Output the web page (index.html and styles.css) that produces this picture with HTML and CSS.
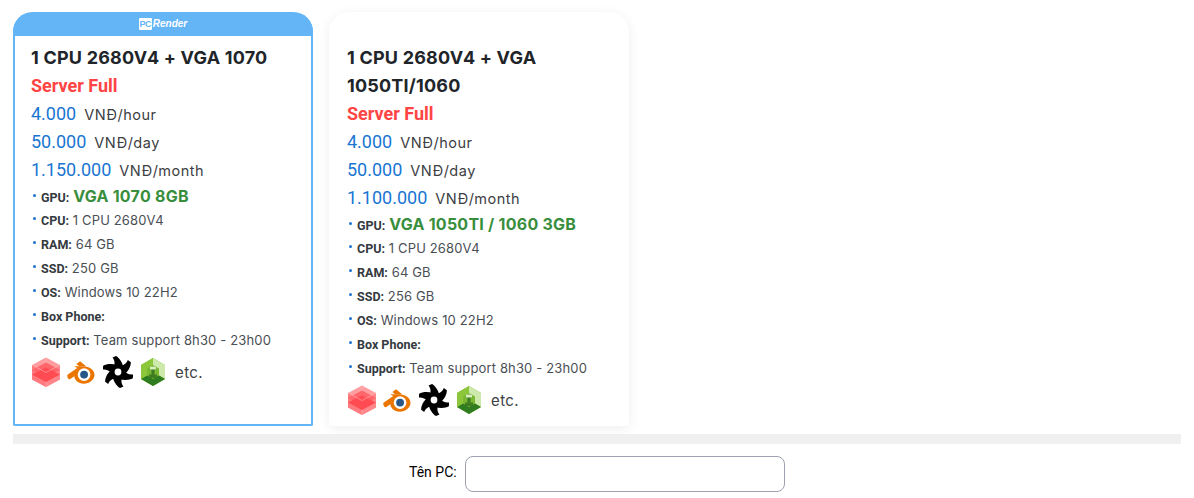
FILE: index.html
```html
<!DOCTYPE html>
<html lang="vi">
<head>
<meta charset="utf-8">
<title>PC Render</title>
<link rel="stylesheet" href="styles.css">
</head>
<body>
<svg class="defs" width="0" height="0" aria-hidden="true">
  <defs>
    <symbol id="i-redshift" viewBox="0 0 30 30">
      <path d="M15 0.500 29 8V22.500L15 30 1 22.500V8Z" fill="#ff9ea1"/>
      <path d="M1 8 15 15.500V30L1 22.500Z" fill="#ff7a7e"/>
      <path d="M29 8 15 15.500V30L29 22.500Z" fill="#ff868a"/>
      <path d="M1 13 15 5.500 29 13 15 20.500Z" fill="#ff666b"/>
      <path d="M1 17.500 15 10.500 29 17.500 15 25Z" fill="#ff4b51"/>
      <path d="M15 0.500V5.500M15 25V30M1 8 15 15.500 29 8" stroke="#ffb4b7" stroke-width=".6" fill="none"/>
    </symbol>
    <symbol id="i-blender" viewBox="0 0 30 26">
      <path d="M.5 16 11 8.800 7.500 6.800 H17.500 C24 6.800 29.500 11 29.500 16 C29.500 21.500 24 25.500 18 25.500 C12 25.500 8.200 21.500 7.800 17.500 L3.200 20.800 C1.200 21.500 -.2 17.500 .5 16Z" fill="#ea7600"/>
      <path d="M14 1.500 20.500 6.800H13L10 4.500Z" fill="#ea7600"/>
      <circle cx="18.300" cy="15.800" r="6.800" fill="#fff"/>
      <circle cx="18.300" cy="15.800" r="4.200" fill="#265787"/>
    </symbol>
    <symbol id="i-octane" viewBox="0 0 30 32">
      <g fill="#000">
        <circle cx="15" cy="16" r="6"/>
        <path d="M10 12.500C12 9 12.300 5 9.500 1.500L13 0C16.500 2 19.500 6.500 20.500 12Z"/>
        <path d="M10 12.500C12 9 12.300 5 9.500 1.500L13 0C16.500 2 19.500 6.500 20.500 12Z" transform="rotate(60 15 16)"/>
        <path d="M10 12.500C12 9 12.300 5 9.500 1.500L13 0C16.500 2 19.500 6.500 20.500 12Z" transform="rotate(120 15 16)"/>
        <path d="M10 12.500C12 9 12.300 5 9.500 1.500L13 0C16.500 2 19.500 6.500 20.500 12Z" transform="rotate(180 15 16)"/>
        <path d="M10 12.500C12 9 12.300 5 9.500 1.500L13 0C16.500 2 19.500 6.500 20.500 12Z" transform="rotate(240 15 16)"/>
        <path d="M10 12.500C12 9 12.300 5 9.500 1.500L13 0C16.500 2 19.500 6.500 20.500 12Z" transform="rotate(300 15 16)"/>
      </g>
      <circle cx="15" cy="16" r="3.400" fill="#fff"/>
    </symbol>
    <symbol id="i-hex" viewBox="0 0 26 30">
      <path d="M13 1 25 8V22L13 29 1 22V8Z" fill="#7ab833"/>
      <path d="M13 1 25 8V22L19 18.500V11.500L13 8Z" fill="#cde9ab"/>
      <path d="M1 22 7 18.500 13 22 19 18.500 25 22 13 29Z" fill="#2f7d20"/>
      <path d="M1 8 13 1V8L7 11.500V18.500L1 22Z" fill="#8cc63a"/>
      <path d="M10 9.500H16V12.500H14.600V17.500H17V21H9V17.500H11.400V12.500H10Z" fill="#3f7d20"/>
      <path d="M10 9.500H16V12.500H10Z" fill="#d9efbd"/>
    </symbol>
  </defs>
</svg>

<main class="page">
  <section class="plans">
    <article class="card card-active">
      <header class="card-head">
        <span class="brand"><b class="brand-pc">PC</b><i class="brand-name">Render</i></span>
      </header>
      <div class="card-body">
        <h2 class="card-title">1 CPU 2680V4 + VGA 1070</h2>
        <p class="status">Server Full</p>
        <p class="price"><span class="amount">4.000</span> <span class="unit">VNĐ/hour</span></p>
        <p class="price"><span class="amount">50.000</span> <span class="unit">VNĐ/day</span></p>
        <p class="price"><span class="amount">1.150.000</span> <span class="unit">VNĐ/month</span></p>
        <ul class="specs">
          <li class="spec"><strong>GPU:</strong> <span class="gpu">VGA 1070 8GB</span></li>
          <li class="spec"><strong>CPU:</strong> 1 CPU 2680V4</li>
          <li class="spec"><strong>RAM:</strong> 64 GB</li>
          <li class="spec"><strong>SSD:</strong> 250 GB</li>
          <li class="spec"><strong>OS:</strong> Windows 10 22H2</li>
          <li class="spec"><strong>Box Phone:</strong></li>
          <li class="spec"><strong>Support:</strong> Team support 8h30 - 23h00</li>
        </ul>
        <div class="apps">
          <svg class="app app-redshift"><use href="#i-redshift"/></svg>
          <svg class="app app-blender"><use href="#i-blender"/></svg>
          <svg class="app app-octane"><use href="#i-octane"/></svg>
          <svg class="app app-hex"><use href="#i-hex"/></svg>
          <span class="etc">etc.</span>
        </div>
      </div>
    </article>

    <article class="card">
      <header class="card-head"></header>
      <div class="card-body">
        <h2 class="card-title">1 CPU 2680V4 + VGA 1050TI/1060</h2>
        <p class="status">Server Full</p>
        <p class="price"><span class="amount">4.000</span> <span class="unit">VNĐ/hour</span></p>
        <p class="price"><span class="amount">50.000</span> <span class="unit">VNĐ/day</span></p>
        <p class="price"><span class="amount">1.100.000</span> <span class="unit">VNĐ/month</span></p>
        <ul class="specs">
          <li class="spec"><strong>GPU:</strong> <span class="gpu">VGA 1050TI / 1060 3GB</span></li>
          <li class="spec"><strong>CPU:</strong> 1 CPU 2680V4</li>
          <li class="spec"><strong>RAM:</strong> 64 GB</li>
          <li class="spec"><strong>SSD:</strong> 256 GB</li>
          <li class="spec"><strong>OS:</strong> Windows 10 22H2</li>
          <li class="spec"><strong>Box Phone:</strong></li>
          <li class="spec"><strong>Support:</strong> Team support 8h30 - 23h00</li>
        </ul>
        <div class="apps">
          <svg class="app app-redshift"><use href="#i-redshift"/></svg>
          <svg class="app app-blender"><use href="#i-blender"/></svg>
          <svg class="app app-octane"><use href="#i-octane"/></svg>
          <svg class="app app-hex"><use href="#i-hex"/></svg>
          <span class="etc">etc.</span>
        </div>
      </div>
    </article>
  </section>

  <div class="divider"></div>

  <form class="pc-form">
    <label class="pc-label" for="pc-name">Tên PC:</label>
    <input class="pc-input" id="pc-name" type="text">
  </form>
</main>
</body>
</html>
```

FILE: styles.css
```css
* {
  box-sizing: border-box;
}

html,
body {
  margin: 0;
  padding: 0;
  background: #fff;
}

body {
  font-family: Inter, "Liberation Sans", sans-serif;
  color: #212529;
  overflow: hidden;
}

.defs {
  display: block;
  height: 0;
}

.page {
  padding: 12px 13px 0;
}

.plans {
  display: flex;
  gap: 16px;
  align-items: stretch;
}

.card {
  width: 300px;
  background: #fff;
  border-radius: 20px 20px 4px 4px;
  box-shadow: 0 2px 12px rgba(0, 0, 0, 0.07);
  display: flex;
  flex-direction: column;
}

.card-head {
  height: 24px;
  flex: none;
  display: flex;
  align-items: center;
  justify-content: center;
  border-radius: 20px 20px 0 0;
}

.card-body {
  flex: 1;
  padding: 8px 18px 7px;
}

.card-active {
  border-radius: 20px 20px 2px 2px;
  box-shadow: none;
  border: 2px solid #64b5f6;
  border-top: 0;
}

.card-active .card-head {
  background: #64b5f6;
  margin: 0 -2px;
}

.card-active .card-body {
  padding: 8px 16px 7px;
}

.brand {
  display: inline-flex;
  align-items: center;
  gap: 1px;
  line-height: 12px;
}

.brand-pc {
  display: block;
  width: 13px;
  height: 12px;
  background: #fff;
  border-radius: 1px;
  color: #64b5f6;
  font: 700 9px/12px "Liberation Sans", sans-serif;
  text-align: center;
  letter-spacing: -0.5px;
}

.brand-name {
  color: #fff;
  font: italic 700 10px/12px "Liberation Sans", sans-serif;
}

.card-title {
  margin: 0;
  font-size: 18px;
  line-height: 28px;
  font-weight: 700;
  color: #212529;
  letter-spacing: 0.2px;
}

.status {
  margin: 0;
  font: 700 18px/28px Roboto, sans-serif;
  color: #ff4444;
}

.price {
  margin: 0;
  height: 28px;
  line-height: 27px;
  font-size: 14px;
  white-space: nowrap;
}

.amount {
  font: 400 18px/27px Roboto, sans-serif;
  color: #1976d2;
  margin-right: 4px;
}

.unit {
  color: #3c4043;
  font-size: 14.500px;
  letter-spacing: 0.5px;
}

.specs {
  list-style: none;
  margin: 0;
  padding: 0;
}

.spec {
  height: 24px;
  line-height: 24px;
  font-size: 13px;
  color: #4a4f55;
  white-space: nowrap;
  letter-spacing: 0.15px;
}

.spec::before {
  content: "";
  display: inline-block;
  width: 3.500px;
  height: 3.500px;
  border-radius: 50%;
  background: #1976d2;
  margin: 0 5px 0 1.500px;
  vertical-align: 5px;
}

.spec strong {
  font: 700 12.500px/24px Roboto, sans-serif;
  color: #343a40;
  letter-spacing: 0;
}

.gpu {
  font-size: 16px;
  font-weight: 700;
  color: #388e3c;
  letter-spacing: 0.25px;
}

.apps {
  display: flex;
  align-items: center;
  height: 38px;
  margin-top: 1px;
}

.app {
  flex: none;
}

.app-redshift {
  width: 30px;
  height: 30px;
}

.app-blender {
  width: 28px;
  height: 26px;
  margin-left: 6px;
}

.app-octane {
  width: 30px;
  height: 32px;
  margin-left: 8px;
}

.app-hex {
  width: 26px;
  height: 30px;
  margin-left: 7px;
}

.etc {
  margin-left: 9px;
  font-size: 15px;
  letter-spacing: 0.4px;
  color: #3c4043;
}

.divider {
  height: 10px;
  background: #f0f0f0;
  margin: 8px 0 12px;
  width: 1168px;
}

.pc-form {
  display: flex;
  align-items: center;
  gap: 8px;
  padding-left: 396px;
}

.pc-label {
  font: 400 14px/16px Roboto, sans-serif;
  color: #000;
  position: relative;
  top: -2px;
}

.pc-input {
  width: 320px;
  height: 36px;
  border: 1px solid #9ca0b0;
  border-radius: 8px;
  background: #fff;
}
```
